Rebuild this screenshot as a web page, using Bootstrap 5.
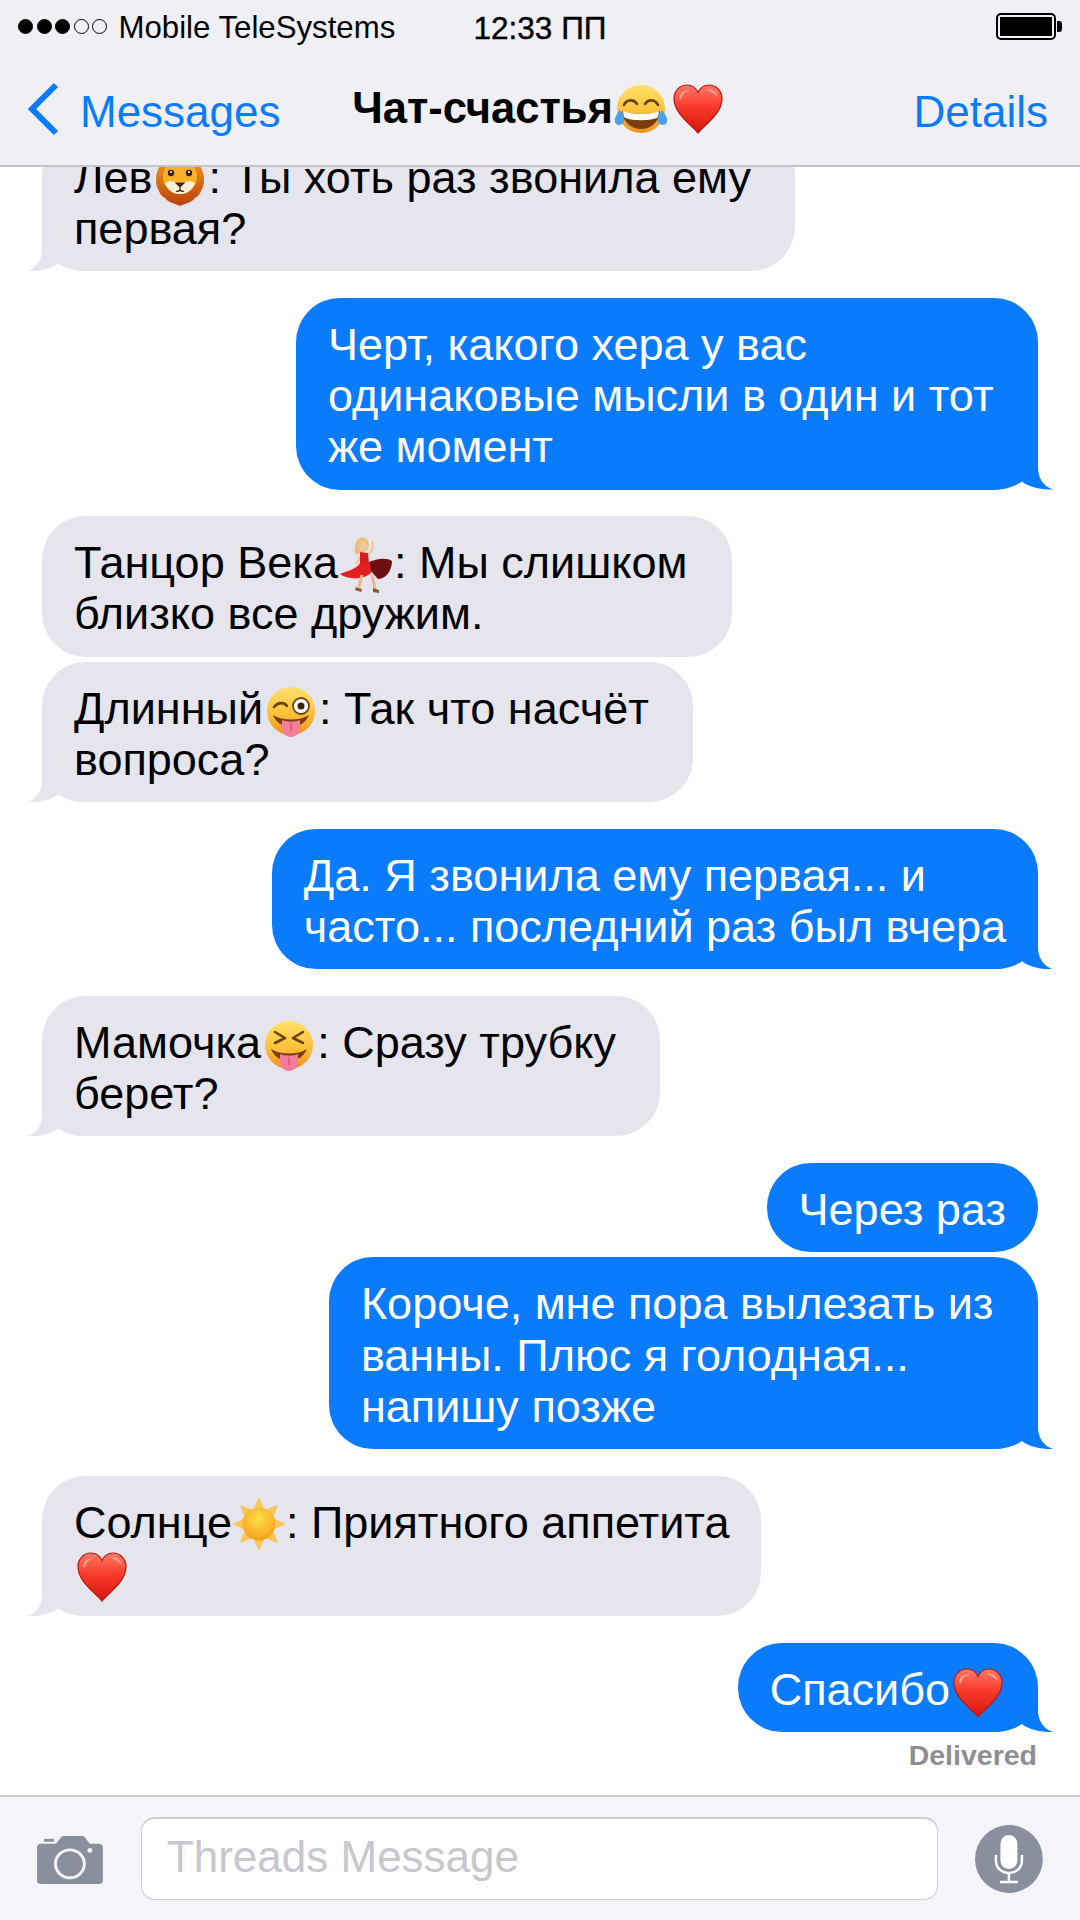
<!DOCTYPE html>
<html lang="ru">
<head>
  <meta charset="UTF-8">
  <title>Чат-счастья</title>
  <meta name="viewport" content="width=device-width, initial-scale=1.0"/>
  <link href="https://cdn.jsdelivr.net/npm/bootstrap@5.3.3/dist/css/bootstrap.min.css" rel="stylesheet"/>
  <style>
    body { font-family: "Liberation Sans", Arial, sans-serif; background: #fff; color: #000; }
    .phone { width: 1080px; height: 1920px; overflow: hidden; }
    .top-bar { height: 167px; background: #f0eff4; border-bottom: 2px solid #c4c4c8; }
    .status-row { height: 52px; padding: 0 18px; font-size: 31.200px; line-height: 52px; }
    .side-part { flex: 1 1 0; min-width: 0; }
    .time-text { font-size: 31.500px; font-weight: 500; -webkit-text-stroke: .4px #000; padding-top: 4px; }
    .dot-sig { width: 15px; height: 15px; border-radius: 50%; background: #000; border: 1.500px solid #000; margin-right: 3.500px; }
    .dot-sig.off { background: transparent; }
    .carrier { margin-left: 8px; padding-top: 4px; }
    .nav-row { height: 113px; padding: 0 32px 0 27px; font-size: 44px; }
    .nav-txt { padding-top: 6px; }
    .back-arrow { margin-right: 20px; }
    .ios-blue { color: #0a7cfb; }
    .title-text { font-weight: 700; font-size: 43.500px; }
    .msgs { flex: 1 1 0; min-height: 0; overflow: hidden; padding: 0 42px 24px; }
    .bubble { position: relative; isolation: isolate; font-size: 45px; line-height: 51.300px; padding: 21px 32px 17px; border-radius: 44px; white-space: nowrap; flex: none; }
    .bubble.in-msg { background: #e6e5ed; align-self: flex-start; }
    .bubble.out-msg { background: #0a7cfb; color: #fff; align-self: flex-end; }
    .gap-big { margin-top: 26.500px; }
    .gap-small { margin-top: 5px; }
    .tail-r::after, .tail-l::after { content: ""; position: absolute; z-index: -1; bottom: 0; width: 60px; height: 46px;
      clip-path: path("M45,0 L45,24 C45,34 50,43 60,46 C50,46.500 36,44 29,38 C22,43 12,46 0,46 L0,0 Z"); }
    .tail-r::after { right: -15px; background: #0a7cfb; }
    .tail-l::after { left: -15px; background: #e6e5ed; transform: scaleX(-1); }
    .emo { width: 50px; height: 50px; margin: -10px 3px; }
    .emo.emo-sun { width: 54px; height: 54px; margin: -13px 0 -10px; }
    .emo.emo-dancer { width: 54px; height: 56px; margin: -14px 1px -11px; }
    .delivered { flex: none; height: 32px; line-height: 32px; margin-top: 7px; padding-right: 1px; text-align: right; font-size: 28.500px; font-weight: 700; color: #8e8e93; }
    .bottom-bar { flex: none; height: 125px; background: #f5f4f8; border-top: 2px solid #c8c7cc; padding: 0 37px; }
    .cam-icon { margin-top: 2px; }
    .msg-field { width: 799px; height: 83px; margin: 0 37px 0 38px; padding: 0 25px; border-color: #cdcdd2; border-top-width: 2px; border-radius: 14px; font-size: 44px; line-height: 76px; color: #c7c7cd; }
  </style>
</head>
<body>
  <svg width="0" height="0" class="position-absolute">
    <defs>
      <linearGradient id="gFace" x1="0" y1="0" x2="0" y2="1"><stop offset="0" stop-color="#ffe168"/><stop offset=".55" stop-color="#fcc13a"/><stop offset="1" stop-color="#f08f1e"/></linearGradient>
      <linearGradient id="gHeart" x1="0" y1="0" x2="0" y2="1"><stop offset="0" stop-color="#ff7a66"/><stop offset=".45" stop-color="#f93a2a"/><stop offset="1" stop-color="#d5150f"/></linearGradient>
      <radialGradient id="gSun" cx=".5" cy=".35" r=".7"><stop offset="0" stop-color="#ffdf50"/><stop offset="1" stop-color="#f79a14"/></radialGradient>
      <linearGradient id="gLion" x1="0" y1="0" x2="0" y2="1"><stop offset="0" stop-color="#f6a01c"/><stop offset="1" stop-color="#b8410e"/></linearGradient>
      <symbol id="e-heart" viewBox="0 0 50 50">
        <path d="M25 49 C16 39 1 29 1 14.500 C1 6 7.500 1 14 1 C19 1 23 4 25 8.500 C27 4 31 1 36 1 C42.500 1 49 6 49 14.500 C49 29 34 39 25 49 Z" fill="url(#gHeart)" stroke="#b31a12" stroke-width="1.200"/>
        <path d="M6 14 C7 8 12 5 17 7 C12 7 9 10 8 16 Z M33 6 C39 4 44 8 45 13 C41 9 37 7 33 6 Z" fill="#ffb3a3" opacity=".8"/>
      </symbol>
      <symbol id="e-laugh" viewBox="0 0 54 50">
        <circle cx="27" cy="25" r="24" fill="url(#gFace)"/>
        <path d="M10 21 C13 15 20 15 23 20 M31 20 C34 15 41 15 44 21" fill="none" stroke="#6b4310" stroke-width="2.600" stroke-linecap="round"/>
        <path d="M8 27 C18 31 36 31 46 27 C45 39 36 45 27 45 C18 45 9 39 8 27 Z" fill="#7a3d10"/>
        <path d="M9 27 C18 31 36 31 45 27 C45 30 44 33 43 34 C34 37 20 37 11 34 C10 33 9 30 9 27 Z" fill="#fff"/>
        <path d="M6 26 C9 30 11 34 10 38 C8 42 2 42 1 38 C0 34 3 30 6 26 Z M48 26 C45 30 43 34 44 38 C46 42 52 42 53 38 C54 34 51 30 48 26 Z" fill="#4aa3e8"/>
      </symbol>
      <symbol id="e-wink" viewBox="0 0 50 50">
        <circle cx="25" cy="24" r="24" fill="url(#gFace)"/>
        <path d="M8 20 C12 15 18 15 21 19" fill="none" stroke="#6b4310" stroke-width="2.600" stroke-linecap="round"/>
        <circle cx="35" cy="19" r="8" fill="#fff" stroke="#6b4310" stroke-width="1.800"/>
        <circle cx="35" cy="19" r="3.500" fill="#3a2208"/>
        <path d="M7 28 C16 34 34 34 43 28 C41 33 37 37 33 38 L17 38 C13 37 9 33 7 28 Z" fill="#7a3d10"/>
        <path d="M16 33 C21 35 29 35 34 33 L34 41 C34 46 30 50 25 50 C20 50 16 46 16 41 Z" fill="#f47d9c"/>
        <path d="M25 36 L25 44" stroke="#d6567a" stroke-width="1.500"/>
      </symbol>
      <symbol id="e-squint" viewBox="0 0 50 50">
        <circle cx="25" cy="24" r="24" fill="url(#gFace)"/>
        <path d="M11 11 L21 17 L11 22 M39 11 L29 17 L39 22" fill="none" stroke="#6b4310" stroke-width="2.600" stroke-linecap="round" stroke-linejoin="round"/>
        <path d="M7 28 C16 34 34 34 43 28 C41 33 37 37 33 38 L17 38 C13 37 9 33 7 28 Z" fill="#7a3d10"/>
        <path d="M16 33 C21 35 29 35 34 33 L34 41 C34 46 30 50 25 50 C20 50 16 46 16 41 Z" fill="#f47d9c"/>
        <path d="M25 36 L25 44" stroke="#d6567a" stroke-width="1.500"/>
      </symbol>
      <symbol id="e-lion" viewBox="0 0 50 50">
        <path d="M25 50 C19 47 14 47 10 42 C5 40 4 34 2 31 C0 24 1 14 6 9 C10 2 18 0 25 0 C32 0 40 2 44 9 C49 14 50 24 48 31 C46 34 45 40 40 42 C36 47 31 47 25 50 Z" fill="url(#gLion)"/>
        <ellipse cx="25" cy="21" rx="17" ry="17" fill="#fbb02a"/>
        <path d="M10 27 C16 23 20 27 25 26 C30 27 34 23 40 27 C37 35 31 38 25 38 C19 38 13 35 10 27 Z" fill="#fbf0d8"/>
        <circle cx="16" cy="17" r="3.200" fill="#3a2208"/><circle cx="34" cy="17" r="3.200" fill="#3a2208"/>
        <circle cx="16" cy="16" r="1" fill="#fff"/><circle cx="34" cy="16" r="1" fill="#fff"/>
        <path d="M21 27 L29 27 L25 31 Z M25 31 L25 34 M21 35 C23 36 24 35 25 34 C26 35 27 36 29 35" fill="#3a2208" stroke="#3a2208" stroke-width="1.200"/>
      </symbol>
      <symbol id="e-sun" viewBox="0 0 54 54">
        <g fill="#f8c75a">
          <path d="M27 0 L32 11 L22 11 Z M27 54 L32 43 L22 43 Z M0 27 L11 22 L11 32 Z M54 27 L43 22 L43 32 Z"/>
          <path d="M8 8 L19 12 L12 19 Z M46 8 L35 12 L42 19 Z M8 46 L19 42 L12 35 Z M46 46 L35 42 L42 35 Z"/>
        </g>
        <circle cx="27" cy="27" r="16.500" fill="url(#gSun)"/>
      </symbol>
      <symbol id="e-dancer" viewBox="0 0 54 56">
        <path d="M17 6 C18 0 27 -1 29 4 C31 8 29 13 27 14 C24 15 20 16 17 18 C15 14 15 10 17 6 Z" fill="#e8c078"/>
        <ellipse cx="24" cy="9" rx="4" ry="5" fill="#f3c6a0"/>
        <path d="M33 4 C35 9 33 15 28 19 M21 20 L17 27" fill="none" stroke="#f0c39a" stroke-width="2"/>
        <path d="M21 15 L29 16 L30 27 L21 27 Z" fill="#d81e1a"/>
        <path d="M30 25 C37 22 47 20 53 24 C53 33 47 42 39 42 L30 32 Z" fill="#6d0e10"/>
        <path d="M21 26 L31 26 L32 36 C25 43 9 43 1 37 C4 35 17 33 21 26 Z" fill="#e3201c"/>
        <path d="M23 38 L20 50 M33 38 L36 52" fill="none" stroke="#e9b78d" stroke-width="3"/>
        <path d="M17 50 L23 52 L22 55 L16 53 Z M34 51 L40 53 L40 56 L34 55 Z" fill="#8a5a2c"/>
      </symbol>
    </defs>
  </svg>

  <div class="phone d-flex flex-column">
    <div class="top-bar flex-none">
      <div class="status-row d-flex align-items-center">
        <div class="side-part d-flex align-items-center">
          <span class="dot-sig"></span><span class="dot-sig"></span><span class="dot-sig"></span><span class="dot-sig off"></span><span class="dot-sig off"></span>
          <span class="carrier">Mobile TeleSystems</span>
        </div>
        <div class="time-text">12:33 ПП</div>
        <div class="side-part d-flex justify-content-end align-items-center">
          <svg width="66" height="27" viewBox="0 0 66 27">
            <rect x="1" y="1" width="58" height="25" rx="4" fill="none" stroke="#000" stroke-width="2"/>
            <rect x="4" y="4" width="52" height="19" fill="#000"/>
            <path d="M61 8 h2 q3 0 3 3 v5 q0 3 -3 3 h-2 Z" fill="#000"/>
          </svg>
        </div>
      </div>
      <div class="nav-row d-flex align-items-center">
        <div class="side-part d-flex align-items-center ios-blue">
          <svg width="33" height="54" viewBox="0 0 33 54" class="back-arrow flex-none"><path d="M29 3 L5 27 L29 51" fill="none" stroke="#0a7cfb" stroke-width="6"/></svg>
          <span class="nav-txt">Messages</span>
        </div>
        <div class="title-text d-flex align-items-center">Чат-счастья<svg class="flex-none" width="56" height="50"><use href="#e-laugh"/></svg><svg class="flex-none ms-1" width="50" height="50"><use href="#e-heart"/></svg></div>
        <div class="side-part text-end ios-blue nav-txt">Details</div>
      </div>
    </div>

    <div class="msgs d-flex flex-column justify-content-end">
      <div class="bubble in-msg tail-l">Лев<svg class="emo"><use href="#e-lion"/></svg>: Ты хоть раз звонила ему&nbsp;<br>первая?</div>
      <div class="bubble out-msg tail-r gap-big">Черт, какого хера у вас<br>одинаковые мысли в один и тот&nbsp;<br>же момент</div>
      <div class="bubble in-msg gap-big">Танцор Века<svg class="emo emo-dancer"><use href="#e-dancer"/></svg>: Мы слишком&nbsp;<br>близко все дружим.</div>
      <div class="bubble in-msg tail-l gap-small">Длинный<svg class="emo"><use href="#e-wink"/></svg>: Так что насчёт&nbsp;<br>вопроса?</div>
      <div class="bubble out-msg tail-r gap-big">Да. Я звонила ему первая... и<br>часто... последний раз был вчера</div>
      <div class="bubble in-msg tail-l gap-big">Мамочка<svg class="emo"><use href="#e-squint"/></svg>: Сразу трубку&nbsp;<br>берет?</div>
      <div class="bubble out-msg gap-big">Через раз</div>
      <div class="bubble out-msg tail-r gap-small">Короче, мне пора вылезать из&nbsp;<br>ванны. Плюс я голодная...<br>напишу позже</div>
      <div class="bubble in-msg tail-l gap-big">Солнце<svg class="emo emo-sun"><use href="#e-sun"/></svg>: Приятного аппетита<br><svg class="emo"><use href="#e-heart"/></svg></div>
      <div class="bubble out-msg tail-r gap-big">Спасибо<svg class="emo"><use href="#e-heart"/></svg></div>
      <div class="delivered">Delivered</div>
    </div>

    <div class="bottom-bar d-flex align-items-center">
      <svg class="flex-none cam-icon" width="66" height="48" viewBox="0 0 66 50" preserveAspectRatio="none">
        <path d="M7 3 h10 v3 h-10 Z" fill="#8a8f9e"/>
        <path d="M4 8 H19 L24 1.500 Q25 0 27 0 H45 Q47 0 48 1.500 L53 8 H62 Q66 8 66 12 V46 Q66 50 62 50 H4 Q0 50 0 46 V12 Q0 8 4 8 Z" fill="#8a8f9e"/>
        <circle cx="33" cy="29" r="14.500" fill="none" stroke="#f5f4f8" stroke-width="3"/>
        <circle cx="53" cy="15" r="2.500" fill="#f5f4f8"/>
      </svg>
      <div class="form-control msg-field flex-none">Threads Message</div>
      <svg class="flex-none" width="68" height="68" viewBox="0 0 68 68">
        <circle cx="34" cy="34" r="34" fill="#8a8f9e"/>
        <rect x="25.500" y="10" width="17" height="34" rx="8.500" fill="#fff"/>
        <path d="M21 30 V36 C21 43 27 48 34 48 C41 48 47 43 47 36 V30 M34 48 V57 M25 57 H43" fill="none" stroke="#fff" stroke-width="2.500"/>
      </svg>
    </div>
  </div>

  <script src="https://cdn.jsdelivr.net/npm/bootstrap@5.3.3/dist/js/bootstrap.bundle.min.js"></script>
</body>
</html>
